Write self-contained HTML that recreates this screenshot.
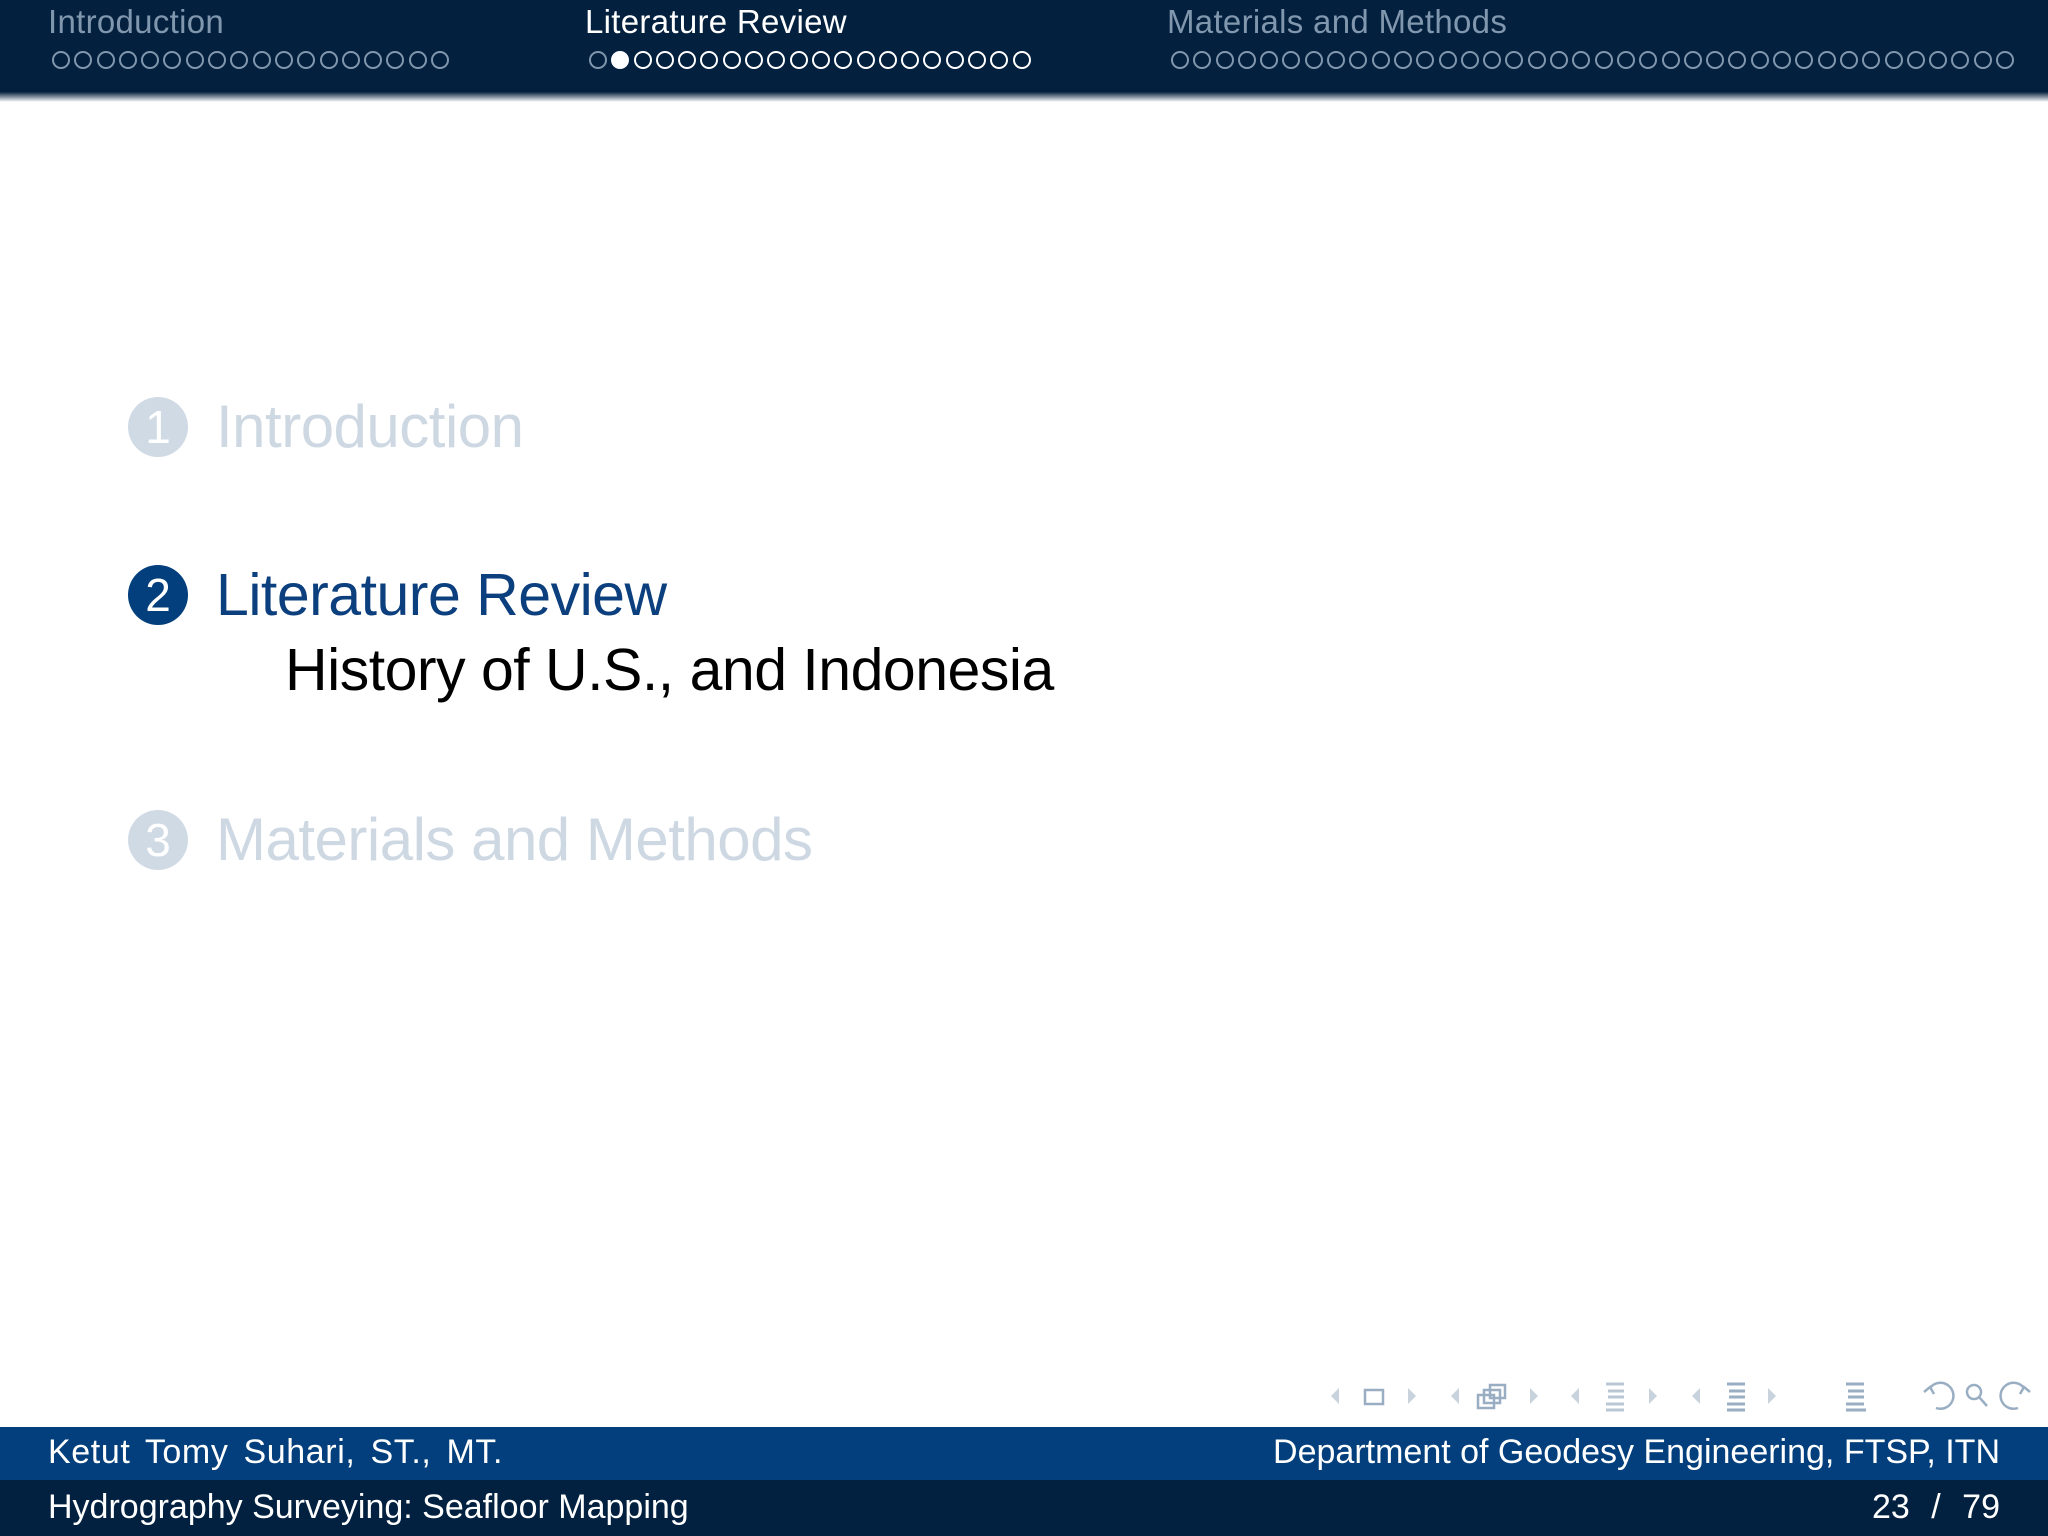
<!DOCTYPE html>
<html><head><meta charset="utf-8"><style>
*{margin:0;padding:0;box-sizing:border-box}
body{width:2048px;height:1536px;background:#fff;position:relative;overflow:hidden;font-family:"Liberation Sans",sans-serif}
.hdr{position:absolute;left:0;top:0;width:2048px;height:92px;background:#03203f}
.shd{position:absolute;left:0;top:92px;width:2048px;height:10px;background:linear-gradient(#0a2540,#fff)}
.ht{position:absolute;top:3px;font-size:33px;color:#8197ae;white-space:nowrap;letter-spacing:0.3px}
.dots{position:absolute;top:51px;display:flex;gap:4.3px}
.dots span{width:18px;height:18px;border:2px solid #8197ae;border-radius:50%}
.w span{border-color:#fff}
.w span.f{background:#fff}
.circ{position:absolute;width:60px;height:60px;border-radius:50%;color:#fff;font-size:46px;text-align:center;line-height:60px}
.t{position:absolute;font-size:60px;white-space:nowrap;letter-spacing:-0.5px}
.f1{position:absolute;left:0;top:1427px;width:2048px;height:53px;background:#033f7c}
.f2{position:absolute;left:0;top:1480px;width:2048px;height:56px;background:#02203f}
.ft{position:absolute;color:#fff;font-size:34px;white-space:nowrap}
</style></head><body>
<div class="hdr"></div><div class="shd"></div>
<div class="ht" style="left:48px">Introduction</div>
<div class="ht" style="left:585px;color:#fff">Literature Review</div>
<div class="ht" style="left:1167px">Materials and Methods</div>
<div class="dots" style="left:52px"><span></span><span></span><span></span><span></span><span></span><span></span><span></span><span></span><span></span><span></span><span></span><span></span><span></span><span></span><span></span><span></span><span></span><span></span></div>
<div class="dots w" style="left:589px"><span style="border-color:#8197ae"></span><span class="f"></span><span></span><span></span><span></span><span></span><span></span><span></span><span></span><span></span><span></span><span></span><span></span><span></span><span></span><span></span><span></span><span></span><span></span><span></span></div>
<div class="dots" style="left:1171px"><span></span><span></span><span></span><span></span><span></span><span></span><span></span><span></span><span></span><span></span><span></span><span></span><span></span><span></span><span></span><span></span><span></span><span></span><span></span><span></span><span></span><span></span><span></span><span></span><span></span><span></span><span></span><span></span><span></span><span></span><span></span><span></span><span></span><span></span><span></span><span></span><span></span><span></span></div>

<div class="circ" style="left:128px;top:397px;background:#cfdae5">1</div>
<div class="t" style="left:216px;top:392px;color:#cdd8e3">Introduction</div>
<div class="circ" style="left:128px;top:565px;background:#033f7c">2</div>
<div class="t" style="left:216px;top:561px;color:#0b3f7d;font-size:59px">Literature Review</div>
<div class="t" style="left:285px;top:636px;color:#000;font-size:59px">History of U.S., and Indonesia</div>
<div class="circ" style="left:128px;top:810px;background:#cfdae5">3</div>
<div class="t" style="left:216px;top:805px;color:#cdd8e3">Materials and Methods</div>

<svg style="position:absolute;left:0;top:1370px" width="2048" height="50" viewBox="0 1370 2048 50">
<g fill="#c9d3de">
<path d="M1339 1388 L1331 1396 L1339 1404Z"/><path d="M1408 1388 L1416 1396 L1408 1404Z"/>
<path d="M1459 1388 L1451 1396 L1459 1404Z"/><path d="M1530 1388 L1538 1396 L1530 1404Z"/>
<path d="M1579 1388 L1571 1396 L1579 1404Z"/><path d="M1649 1388 L1657 1396 L1649 1404Z"/>
<path d="M1700 1388 L1692 1396 L1700 1404Z"/><path d="M1768 1388 L1776 1396 L1768 1404Z"/>
</g>
<g fill="none" stroke="#9aaec3" stroke-width="2.5">
<rect x="1365" y="1390" width="18" height="14"/>
<rect x="1478" y="1395" width="16" height="13"/><rect x="1484" y="1390" width="16" height="13"/><rect x="1490" y="1385" width="15" height="13"/>
</g>
<g stroke-width="3">
<path d="M1606 1384h18M1608 1391h16M1608 1397h16M1606 1404h18M1606 1410h18" stroke="#b9c7d5"/>
<path d="M1727 1384h18M1729 1391h16M1729 1397h16M1727 1404h18M1727 1410h18" stroke="#9aaec3"/>
<path d="M1846 1384h18M1848 1391h16M1848 1397h16M1846 1404h18M1846 1410h20" stroke="#9aaec3"/>
</g>
<g fill="none" stroke="#9aaec3" stroke-width="2.5">
<path d="M1930 1388 a13 13 0 1 1 6 20"/><path d="M1924 1392 l6 -5 l4 7"/>
<circle cx="1974" cy="1392" r="7"/><path d="M1979 1397 l8 9"/>
<path d="M2024 1388 a13 13 0 1 0 -6 20"/><path d="M2030 1392 l-6 -5 l-4 7"/>
</g>
</svg>

<div class="f1"></div><div class="f2"></div>
<div class="ft" style="left:48px;top:1433px;word-spacing:5px;letter-spacing:0.6px">Ketut Tomy Suhari, ST., MT.</div>
<div class="ft" style="right:48px;top:1433px">Department of Geodesy Engineering, FTSP, ITN</div>
<div class="ft" style="left:48px;top:1488px">Hydrography Surveying: Seafloor Mapping</div>
<div class="ft" style="right:48px;top:1488px;word-spacing:12px">23 / 79</div>
</body></html>
